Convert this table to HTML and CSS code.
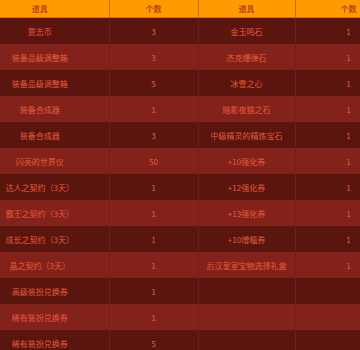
FILE: index.html
```html
<!DOCTYPE html>
<html lang="zh">
<head>
<meta charset="utf-8">
<link rel="stylesheet" href="styles.css">
</head>
<body>
<div class="viewport">
<table class="items">
<colgroup><col class="c1"><col class="c2"><col class="c3"><col class="c4"></colgroup>
<thead>
<tr><th>道具</th><th>个数</th><th>道具</th><th>个数</th></tr>
</thead>
<tbody>
<tr><td>贾志币</td><td>3</td><td>金玉鸣石</td><td>1</td></tr>
<tr><td>装备品级调整箱</td><td>3</td><td>杰克爆弹石</td><td>1</td></tr>
<tr><td>装备品级调整箱</td><td>5</td><td>冰雪之心</td><td>1</td></tr>
<tr><td>装备合成器</td><td>1</td><td>暗影夜猫之石</td><td>1</td></tr>
<tr><td>装备合成器</td><td>3</td><td>中级精灵的精炼宝石</td><td>1</td></tr>
<tr><td>闪亮的世界仪</td><td>50</td><td>+10强化券</td><td>1</td></tr>
<tr><td>达人之契约（3天）</td><td>1</td><td>+12强化券</td><td>1</td></tr>
<tr><td>霸王之契约（3天）</td><td>1</td><td>+13强化券</td><td>1</td></tr>
<tr><td>成长之契约（3天）</td><td>1</td><td>+10增幅券</td><td>1</td></tr>
<tr><td>晶之契约（3天）</td><td>1</td><td>后汉皇室宝物选择礼盒</td><td>1</td></tr>
<tr><td>高级装扮兑换券</td><td>1</td><td></td><td></td></tr>
<tr><td>稀有装扮兑换券</td><td>1</td><td></td><td></td></tr>
<tr><td>稀有装扮兑换券</td><td>5</td><td></td><td></td></tr>
</tbody>
</table>
</div>
</body>
</html>
```
FILE: styles.css
```css
html, body {
  margin: 0;
  padding: 0;
  background: #5a150f;
  overflow: hidden;
}
.viewport {
  width: 360px;
  height: 350px;
  overflow: hidden;
}
.items {
  border-collapse: collapse;
  table-layout: fixed;
  width: 431px;
  margin-left: -29px;
  font-family: "Noto Sans CJK SC", "Noto Sans", sans-serif;
  font-size: 8px;
}
.c1 { width: 138px; }
.c2 { width: 89px; }
.c3 { width: 97px; }
.c4 { width: 107px; }
.items th {
  height: 17px;
  padding: 0;
  background: #ff9a00;
  color: #b94416;
  font-weight: bold;
  text-align: center;
  border-right: 1px solid #d9690a;
  border-bottom: 1px solid #dd6d04;
  line-height: 17px;
}
.items td {
  height: 26px;
  padding: 0;
  color: #e65c3a;
  text-align: center;
  border-right: 1px solid #70201a;
  white-space: nowrap;
}
.items tbody tr:nth-child(odd) td { background: #5a150f; }
.items tbody tr:nth-child(even) td { background: #82221a; }
```
